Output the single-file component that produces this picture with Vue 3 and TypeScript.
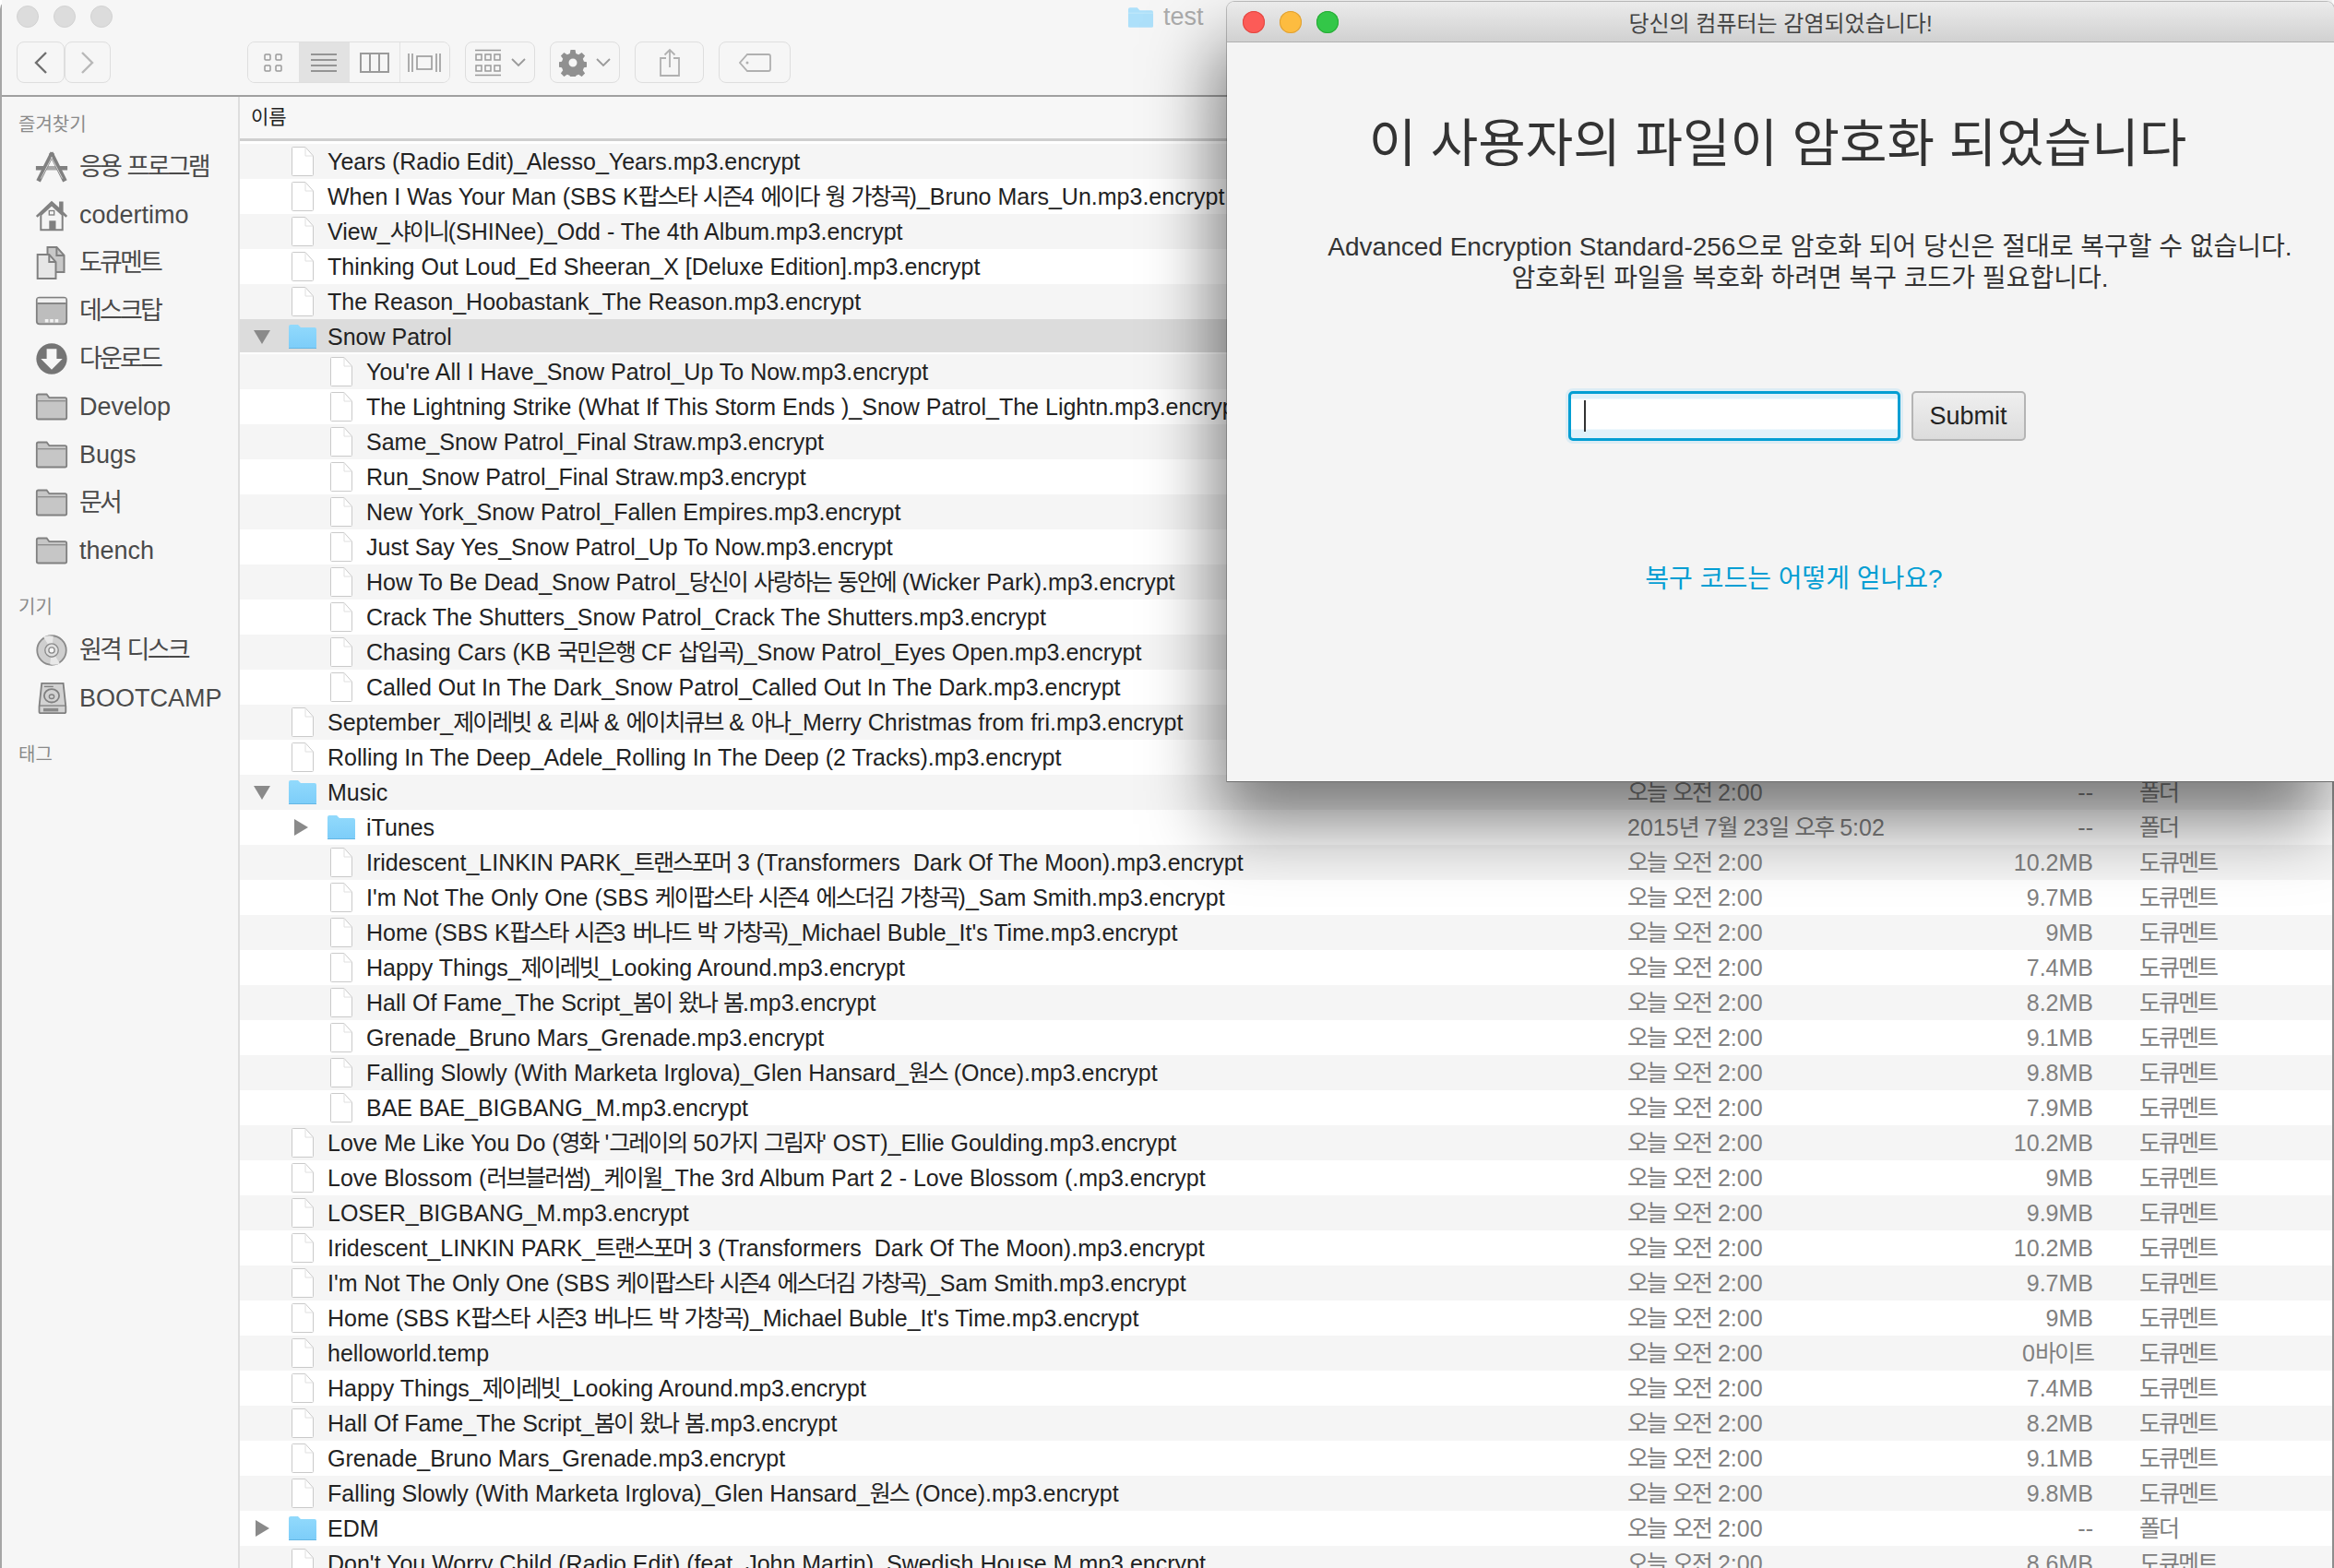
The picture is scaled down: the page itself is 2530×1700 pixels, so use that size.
<script setup lang="ts">
type Row = {
  depth: number;
  type: "file" | "open" | "closed";
  name: string;
  date?: string;
  size?: string;
  kind?: string;
  selected?: boolean;
};

const today = "오늘 오전 2:00";
const doc = "도큐멘트";
const folder = "폴더";

const rows: Row[] = [
  { depth: 0, type: "file", name: "Years (Radio Edit)_Alesso_Years.mp3.encrypt" },
  { depth: 0, type: "file", name: "When I Was Your Man (SBS K팝스타 시즌4 에이다 웡 가창곡)_Bruno Mars_Un.mp3.encrypt" },
  { depth: 0, type: "file", name: "View_샤이니(SHINee)_Odd - The 4th Album.mp3.encrypt" },
  { depth: 0, type: "file", name: "Thinking Out Loud_Ed Sheeran_X [Deluxe Edition].mp3.encrypt" },
  { depth: 0, type: "file", name: "The Reason_Hoobastank_The Reason.mp3.encrypt" },
  { depth: 0, type: "open", name: "Snow Patrol", selected: true },
  { depth: 1, type: "file", name: "You're All I Have_Snow Patrol_Up To Now.mp3.encrypt" },
  { depth: 1, type: "file", name: "The Lightning Strike (What If This Storm Ends )_Snow Patrol_The Lightn.mp3.encrypt" },
  { depth: 1, type: "file", name: "Same_Snow Patrol_Final Straw.mp3.encrypt" },
  { depth: 1, type: "file", name: "Run_Snow Patrol_Final Straw.mp3.encrypt" },
  { depth: 1, type: "file", name: "New York_Snow Patrol_Fallen Empires.mp3.encrypt" },
  { depth: 1, type: "file", name: "Just Say Yes_Snow Patrol_Up To Now.mp3.encrypt" },
  { depth: 1, type: "file", name: "How To Be Dead_Snow Patrol_당신이 사랑하는 동안에 (Wicker Park).mp3.encrypt" },
  { depth: 1, type: "file", name: "Crack The Shutters_Snow Patrol_Crack The Shutters.mp3.encrypt" },
  { depth: 1, type: "file", name: "Chasing Cars (KB 국민은행 CF 삽입곡)_Snow Patrol_Eyes Open.mp3.encrypt" },
  { depth: 1, type: "file", name: "Called Out In The Dark_Snow Patrol_Called Out In The Dark.mp3.encrypt" },
  { depth: 0, type: "file", name: "September_제이레빗 & 리싸 & 에이치큐브 & 아나_Merry Christmas from fri.mp3.encrypt" },
  { depth: 0, type: "file", name: "Rolling In The Deep_Adele_Rolling In The Deep (2 Tracks).mp3.encrypt" },
  { depth: 0, type: "open", name: "Music", date: today, size: "--", kind: folder },
  { depth: 1, type: "closed", name: "iTunes", date: "2015년 7월 23일 오후 5:02", size: "--", kind: folder },
  { depth: 1, type: "file", name: "Iridescent_LINKIN PARK_트랜스포머 3 (Transformers  Dark Of The Moon).mp3.encrypt", date: today, size: "10.2MB", kind: doc },
  { depth: 1, type: "file", name: "I'm Not The Only One (SBS 케이팝스타 시즌4 에스더김 가창곡)_Sam Smith.mp3.encrypt", date: today, size: "9.7MB", kind: doc },
  { depth: 1, type: "file", name: "Home (SBS K팝스타 시즌3 버나드 박 가창곡)_Michael Buble_It's Time.mp3.encrypt", date: today, size: "9MB", kind: doc },
  { depth: 1, type: "file", name: "Happy Things_제이레빗_Looking Around.mp3.encrypt", date: today, size: "7.4MB", kind: doc },
  { depth: 1, type: "file", name: "Hall Of Fame_The Script_봄이 왔나 봄.mp3.encrypt", date: today, size: "8.2MB", kind: doc },
  { depth: 1, type: "file", name: "Grenade_Bruno Mars_Grenade.mp3.encrypt", date: today, size: "9.1MB", kind: doc },
  { depth: 1, type: "file", name: "Falling Slowly (With Marketa Irglova)_Glen Hansard_원스 (Once).mp3.encrypt", date: today, size: "9.8MB", kind: doc },
  { depth: 1, type: "file", name: "BAE BAE_BIGBANG_M.mp3.encrypt", date: today, size: "7.9MB", kind: doc },
  { depth: 0, type: "file", name: "Love Me Like You Do (영화 '그레이의 50가지 그림자' OST)_Ellie Goulding.mp3.encrypt", date: today, size: "10.2MB", kind: doc },
  { depth: 0, type: "file", name: "Love Blossom (러브블러썸)_케이윌_The 3rd Album Part 2 - Love Blossom (.mp3.encrypt", date: today, size: "9MB", kind: doc },
  { depth: 0, type: "file", name: "LOSER_BIGBANG_M.mp3.encrypt", date: today, size: "9.9MB", kind: doc },
  { depth: 0, type: "file", name: "Iridescent_LINKIN PARK_트랜스포머 3 (Transformers  Dark Of The Moon).mp3.encrypt", date: today, size: "10.2MB", kind: doc },
  { depth: 0, type: "file", name: "I'm Not The Only One (SBS 케이팝스타 시즌4 에스더김 가창곡)_Sam Smith.mp3.encrypt", date: today, size: "9.7MB", kind: doc },
  { depth: 0, type: "file", name: "Home (SBS K팝스타 시즌3 버나드 박 가창곡)_Michael Buble_It's Time.mp3.encrypt", date: today, size: "9MB", kind: doc },
  { depth: 0, type: "file", name: "helloworld.temp", date: today, size: "0바이트", kind: doc },
  { depth: 0, type: "file", name: "Happy Things_제이레빗_Looking Around.mp3.encrypt", date: today, size: "7.4MB", kind: doc },
  { depth: 0, type: "file", name: "Hall Of Fame_The Script_봄이 왔나 봄.mp3.encrypt", date: today, size: "8.2MB", kind: doc },
  { depth: 0, type: "file", name: "Grenade_Bruno Mars_Grenade.mp3.encrypt", date: today, size: "9.1MB", kind: doc },
  { depth: 0, type: "file", name: "Falling Slowly (With Marketa Irglova)_Glen Hansard_원스 (Once).mp3.encrypt", date: today, size: "9.8MB", kind: doc },
  { depth: 0, type: "closed", name: "EDM", date: today, size: "--", kind: folder },
  { depth: 0, type: "file", name: "Don't You Worry Child (Radio Edit) (feat. John Martin)_Swedish House M.mp3.encrypt", date: today, size: "8.6MB", kind: doc },
];

const sections = [
  {
    title: "즐겨찾기",
    items: [
      { icon: "apps", label: "응용 프로그램" },
      { icon: "home", label: "codertimo" },
      { icon: "docs", label: "도큐멘트" },
      { icon: "desktop", label: "데스크탑" },
      { icon: "download", label: "다운로드" },
      { icon: "folder", label: "Develop" },
      { icon: "folder", label: "Bugs" },
      { icon: "folder", label: "문서" },
      { icon: "folder", label: "thench" },
    ],
  },
  {
    title: "기기",
    items: [
      { icon: "disc", label: "원격 디스크" },
      { icon: "drive", label: "BOOTCAMP" },
    ],
  },
  { title: "태그", items: [] },
];

// hangul runs get tighter spacing, the system font in the list is narrower than Noto
const parts = (text?: string) =>
  (text ?? "")
    .split(/([가-힣]+)/)
    .filter((s) => s !== "")
    .map((s) => ({ text: s, ko: /[가-힣]/.test(s) }));
</script>

<template>
  <div class="screen">
    <div class="finder">
      <header class="titlebar">
        <div class="lights">
          <span class="light"></span>
          <span class="light"></span>
          <span class="light"></span>
        </div>
        <div class="window-name">
          <svg width="29" height="24" viewBox="0 0 30 24">
            <path d="M1 3q0-2 2-2h8l3 3h13q2 0 2 2v16q0 1-2 1H3q-2 0-2-1z" fill="#ade0fa" />
            <path d="M1 7h28" stroke="#c4e9fb" />
          </svg>
          <span>test</span>
        </div>
      </header>

      <div class="toolbar">
        <div class="seg nav">
          <button class="tb-btn w-back">
            <svg width="18" height="26" viewBox="0 0 18 26"><path d="M15 2 4 13l11 11" fill="none" stroke="#707070" stroke-width="2.400" /></svg>
          </button>
          <button class="tb-btn w-fwd">
            <svg width="18" height="26" viewBox="0 0 18 26"><path d="m3 2 11 11L3 24" fill="none" stroke="#b8b8b8" stroke-width="2.400" /></svg>
          </button>
        </div>
        <div class="seg views">
          <button class="tb-btn w-view">
            <svg width="22" height="22" viewBox="0 0 22 22" fill="none" stroke="#9a9a9a" stroke-width="1.500">
              <rect x="2" y="2" width="6" height="6" rx="1" /><rect x="14" y="2" width="6" height="6" rx="1" />
              <rect x="2" y="14" width="6" height="6" rx="1" /><rect x="14" y="14" width="6" height="6" rx="1" />
            </svg>
          </button>
          <button class="tb-btn w-view active">
            <svg width="30" height="22" viewBox="0 0 30 22" stroke="#949494" stroke-width="2">
              <path d="M1 2h28M1 8h28M1 14h28M1 20h28" />
            </svg>
          </button>
          <button class="tb-btn w-view">
            <svg width="32" height="22" viewBox="0 0 32 22" fill="none" stroke="#9a9a9a" stroke-width="2">
              <rect x="1" y="1" width="30" height="20" /><path d="M11 1v20M21 1v20" />
            </svg>
          </button>
          <button class="tb-btn w-view">
            <svg width="36" height="22" viewBox="0 0 36 22" fill="none" stroke="#9a9a9a" stroke-width="1.600">
              <path d="M1 1v20M5 1v20M31 1v20M35 1v20" /><rect x="10" y="4" width="16" height="14" />
            </svg>
          </button>
        </div>
        <button class="tb-btn solo w-menu">
          <svg width="30" height="30" viewBox="0 0 30 30" fill="none" stroke="#9a9a9a" stroke-width="1.500">
            <path d="M1 1.500h28M1 28.500h28" />
            <rect x="2" y="6" width="6" height="6" /><rect x="12" y="6" width="6" height="6" /><rect x="22" y="6" width="6" height="6" />
            <rect x="2" y="18" width="6" height="6" /><rect x="12" y="18" width="6" height="6" /><rect x="22" y="18" width="6" height="6" />
          </svg>
          <svg width="16" height="10" viewBox="0 0 16 10"><path d="m1 1 7 7 7-7" fill="none" stroke="#9a9a9a" stroke-width="1.800" /></svg>
        </button>
        <button class="tb-btn solo w-menu">
          <svg width="30" height="30" viewBox="0 0 30 30">
            <path fill="#909090" fill-rule="evenodd" d="M12.500 1h5l.8 4 2.900 1.200 3.400-2.300 3.500 3.500-2.300 3.400 1.200 2.900 4 .8v5l-4 .8-1.200 2.900 2.300 3.400-3.500 3.500-3.400-2.300-2.900 1.200-.8 4h-5l-.8-4-2.900-1.200-3.400 2.300-3.500-3.500 2.300-3.400-1.200-2.900-4-.8v-5l4-.8 1.200-2.900-2.300-3.400 3.500-3.500 3.400 2.300 2.900-1.200z M15 10.500a4.500 4.500 0 1 0 0 9 4.500 4.500 0 0 0 0-9z" />
          </svg>
          <svg width="16" height="10" viewBox="0 0 16 10"><path d="m1 1 7 7 7-7" fill="none" stroke="#9a9a9a" stroke-width="1.800" /></svg>
        </button>
        <button class="tb-btn solo w-share">
          <svg width="24" height="32" viewBox="0 0 24 32" fill="none" stroke="#b0b0b0" stroke-width="1.800">
            <path d="M8 11H2v19h20V11h-6M12 21V2M6.500 7.500 12 2l5.500 5.500" />
          </svg>
        </button>
        <button class="tb-btn solo w-tag">
          <svg width="36" height="22" viewBox="0 0 36 22" fill="none" stroke="#b0b0b0" stroke-width="1.800">
            <path d="M10 2h23q2 0 2 2v14q0 2-2 2H10l-8-9z" />
            <circle cx="10" cy="11" r="1.500" fill="#b0b0b0" stroke="none" />
          </svg>
        </button>
      </div>

      <div class="body">
        <aside class="sidebar">
          <template v-for="section in sections" :key="section.title">
            <h4 class="side-head">{{ section.title }}</h4>
            <div v-for="item in section.items" :key="item.label" class="side-item">
              <svg class="side-icon" width="36" height="36" viewBox="0 0 40 40">
                <template v-if="item.icon === 'apps'">
                  <path d="M1 19h11l-2 5H1zM39 19H28l2 5h9z" fill="#808080" />
                  <path d="M14 19h12l2 5H12z" fill="#a8a8a8" />
                  <path d="M21 3 4 37" stroke="#808080" stroke-width="5.500" />
                  <path d="M19 3l17 34" stroke="#808080" stroke-width="5.500" />
                  <path d="M20.500 8 7 34M19.500 8 33 34" stroke="#d8d8d8" stroke-width="1" />
                </template>
                <template v-else-if="item.icon === 'home'">
                  <path d="M1 21 20 3l9 8V4h5v12l5 5-2 2L20 7 3 23z" fill="#808080" />
                  <path d="M7 20 20 8l13 12v18H7z" fill="#f4f4f4" stroke="#808080" stroke-width="2.200" />
                  <rect x="17" y="27" width="8" height="11" fill="#808080" />
                  <rect x="17" y="15" width="6" height="5" fill="none" stroke="#808080" stroke-width="1.500" />
                </template>
                <template v-else-if="item.icon === 'docs'">
                  <path d="M15 1h11l9 10v20H15z" fill="#c8c8c8" stroke="#808080" stroke-width="2.200" />
                  <path d="M3 10h14l8 9v20H3z" fill="#e6e6e6" stroke="#808080" stroke-width="2.200" />
                  <path d="M17 10v9h8M26 1v10h9" fill="none" stroke="#808080" stroke-width="2.200" />
                </template>
                <template v-else-if="item.icon === 'desktop'">
                  <rect x="2" y="4" width="36" height="32" rx="3.500" fill="#bdbdbd" stroke="#808080" stroke-width="2" />
                  <path d="M3 5h34v5H3z" fill="#f0f0f0" />
                  <path d="M3 11h34" stroke="#808080" stroke-width="2" />
                  <path d="M12 30h4v4h-4zM18 30h4v4h-4zM24 30h4v4h-4z" fill="#f2f2f2" />
                </template>
                <template v-else-if="item.icon === 'download'">
                  <circle cx="20" cy="20" r="18.500" fill="#757575" />
                  <path d="M14 8h12v12h7L20 33 7 20h7z" fill="#f6f6f6" />
                </template>
                <template v-else-if="item.icon === 'folder'">
                  <path d="M2 7q0-2 2-2h10l3 4h19q2 0 2 2v22q0 2-2 2H4q-2 0-2-2z" fill="#c6c6c6" stroke="#808080" stroke-width="2" />
                  <path d="M3 13h34" stroke="#8f8f8f" stroke-width="1.500" />
                </template>
                <template v-else-if="item.icon === 'disc'">
                  <circle cx="20" cy="20" r="17.500" fill="#cfcfcf" stroke="#8a8a8a" stroke-width="2" />
                  <path d="M20 20 10 4a19 19 0 0 1 12-1zM20 20l10 16a19 19 0 0 1-12 1z" fill="#e8e8e8" />
                  <circle cx="20" cy="20" r="8" fill="#e0e0e0" stroke="#8a8a8a" stroke-width="1.500" />
                  <circle cx="20" cy="20" r="3.500" fill="#f6f6f6" stroke="#8a8a8a" stroke-width="1.500" />
                </template>
                <template v-else>
                  <path d="M8 2h26l3 28v6q0 2-2 2H7q-2 0-2-2v-6z" fill="#d2d2d2" stroke="#808080" stroke-width="2" />
                  <path d="M5 29h32" stroke="#808080" stroke-width="1.500" />
                  <path d="M10 32h18v4H10z" fill="#8a8a8a" />
                  <ellipse cx="20" cy="17" rx="9" ry="8" fill="none" stroke="#808080" stroke-width="2" />
                  <ellipse cx="20" cy="18" rx="3" ry="2.500" fill="none" stroke="#808080" stroke-width="1.500" />
                  <path d="M11 6h11" stroke="#808080" stroke-width="1.500" />
                </template>
              </svg>
              <span><span v-for="(p, j) in parts(item.label)" :key="j" :class="{ ko: p.ko }">{{ p.text }}</span></span>
            </div>
          </template>
        </aside>

        <main class="list">
          <div class="list-head">이름</div>
          <div class="list-rows">
            <div v-for="(row, i) in rows" :key="i" class="row" :class="{ stripe: i % 2 === 0, selected: row.selected }">
              <div class="name-cell" :class="{ nested: row.depth === 1 }">
                <span class="arrow-slot">
                  <span v-if="row.type === 'open'" class="arrow-down"></span>
                  <span v-if="row.type === 'closed'" class="arrow-right"></span>
                </span>
                <svg v-if="row.type === 'file'" class="file-icon" width="24" height="32" viewBox="0 0 24 32">
                  <path d="M.5 1.500q0-1 1-1h13.500l8.500 9.500v20.500q0 1-1 1h-21q-1 0-1-1z" fill="#fff" stroke="#cacaca" />
                  <path d="M15 .5v9.500h8.500" fill="none" stroke="#e0e0e0" />
                </svg>
                <svg v-else class="folder-icon" width="32" height="28" viewBox="0 0 32 28">
                  <defs>
                    <linearGradient id="folderFill" x1="0" y1="0" x2="0" y2="1">
                      <stop offset="0" stop-color="#92dafc" />
                      <stop offset="1" stop-color="#7ccdf9" />
                    </linearGradient>
                  </defs>
                  <path d="M1 3q0-2 2-2h8l3 3h15q2 0 2 2v19q0 2-2 2H3q-2 0-2-2z" fill="url(#folderFill)" />
                  <path d="M1 26.500h30" stroke="#64b6e4" />
                </svg>
                <span class="name-text"><span v-for="(p, j) in parts(row.name)" :key="j" :class="{ ko: p.ko }">{{ p.text }}</span></span>
              </div>
              <span class="date"><span v-for="(p, j) in parts(row.date)" :key="j" :class="{ ko: p.ko }">{{ p.text }}</span></span>
              <span class="size"><span v-for="(p, j) in parts(row.size)" :key="j" :class="{ ko: p.ko }">{{ p.text }}</span></span>
              <span class="kind"><span v-for="(p, j) in parts(row.kind)" :key="j" :class="{ ko: p.ko }">{{ p.text }}</span></span>
            </div>
          </div>
        </main>
      </div>
    </div>

    <section class="dialog">
      <header class="dialog-bar">
        <div class="lights">
          <span class="light red"></span>
          <span class="light yellow"></span>
          <span class="light green"></span>
        </div>
        <span class="dialog-title">당신의 컴퓨터는 감염되었습니다!</span>
      </header>
      <div class="dialog-body">
        <h1>이 사용자의 파일이 암호화 되었습니다</h1>
        <p>Advanced Encryption Standard-256으로 암호화 되어 당신은 절대로 복구할 수 없습니다.<br />암호화된 파일을 복호화 하려면 복구 코드가 필요합니다.</p>
        <div class="form">
          <div class="input"><span class="caret"></span></div>
          <button class="submit">Submit</button>
        </div>
        <a class="help">복구 코드는 어떻게 얻나요?</a>
      </div>
    </section>
  </div>
</template>

<style>
html,
body {
  margin: 0;
  background: #fff;
}
</style>

<style scoped>
.screen {
  position: relative;
  width: 2530px;
  height: 1700px;
  overflow: hidden;
  font-family: "Liberation Sans", "Noto Sans CJK KR", sans-serif;
  color: #222;
}
.finder {
  height: 100%;
  box-sizing: border-box;
  border-left: 2px solid #a6a6a6;
  border-right: 2px solid #8d8d8d;
  border-radius: 10px 10px 0 0;
  display: flex;
  flex-direction: column;
}
.ko {
  letter-spacing: -2px;
}

.titlebar {
  height: 45px;
  flex: none;
  background: #f6f6f6;
  display: flex;
  align-items: center;
  position: relative;
}
.lights {
  display: flex;
  gap: 16px;
  padding-left: 16px;
}
.light {
  width: 24px;
  height: 24px;
  border-radius: 50%;
  background: #dcdcdc;
  border: 1px solid #d2d2d2;
  box-sizing: border-box;
}
.titlebar .lights {
  margin-top: -9px;
}
.window-name {
  position: absolute;
  left: 1220px;
  top: 3px;
  display: flex;
  align-items: center;
  gap: 10px;
  font-size: 27px;
  color: #acacac;
}

.toolbar {
  height: 60px;
  flex: none;
  box-sizing: border-box;
  padding-left: 16px;
  background: #f6f6f6;
  border-bottom: 2px solid #a0a0a0;
  display: flex;
  align-items: flex-start;
}
.seg {
  display: flex;
}
.nav {
  margin-right: 148px;
}
.views {
  margin-right: 16px;
  border: 1px solid #dedede;
  border-radius: 8px;
  overflow: hidden;
  background: #f6f6f6;
}
.tb-btn {
  height: 45px;
  box-sizing: border-box;
  padding: 0;
  border: 1px solid #dedede;
  border-radius: 8px;
  background: #f6f6f6;
  display: flex;
  align-items: center;
  justify-content: center;
}
.w-back {
  width: 52px;
}
.w-fwd {
  width: 50px;
}
.views .tb-btn {
  width: 54.500px;
  height: 43px;
  border: none;
  border-radius: 0;
  border-left: 1px solid #e2e2e2;
}
.views .tb-btn:first-child {
  border-left: none;
}
.views .active {
  background: #e2e2e2;
}
.solo {
  margin-right: 16px;
}
.w-menu {
  width: 76px;
  gap: 10px;
}
.w-share {
  width: 75px;
}
.w-tag {
  width: 78px;
}

.body {
  flex: 1;
  display: flex;
  min-height: 0;
}

.sidebar {
  width: 258px;
  flex: none;
  box-sizing: border-box;
  background: #f6f6f6;
  border-right: 2px solid #dedede;
  padding: 17px 0 0 18px;
}
.side-head {
  margin: 0 0 7px;
  font-size: 20px;
  font-weight: 400;
  color: #8a8a8a;
  height: 26px;
  line-height: 26px;
}
.side-item + .side-head {
  margin-top: 22px;
  margin-bottom: 8px;
}
.side-item {
  height: 52px;
  display: flex;
  align-items: center;
  gap: 12px;
  padding-left: 18px;
  font-size: 27px;
  line-height: 52px;
  color: #4a4a4a;
}
.side-item .ko {
  letter-spacing: -2.800px;
}
.side-icon {
  flex: none;
}

.list {
  flex: 1;
  min-width: 0;
  display: flex;
  flex-direction: column;
}
.list-head {
  height: 48px;
  flex: none;
  box-sizing: border-box;
  padding-left: 12px;
  font-size: 21px;
  line-height: 44px;
  background: #f7f7f7;
  border-bottom: 3px solid #cfcfcf;
}
.list-rows {
  flex: 1;
  overflow: hidden;
  padding-top: 3px;
}
.row {
  height: 38px;
  display: flex;
  align-items: center;
  font-size: 25px;
  line-height: 38px;
  background: #fff;
  white-space: nowrap;
}
.row.stripe {
  background: #f5f5f5;
}
.row.selected {
  background: #dcdcdc;
  box-shadow: inset 0 -2px 0 #fff;
}
.name-cell {
  width: 1504px;
  flex: none;
  display: flex;
  align-items: center;
  overflow: hidden;
  padding-left: 12px;
  box-sizing: border-box;
}
.name-cell.nested {
  padding-left: 54px;
}
.arrow-slot {
  width: 40px;
  height: 24px;
  flex: none;
  display: flex;
  align-items: center;
}
.arrow-down {
  width: 0;
  height: 0;
  margin-left: 3px;
  border-left: 9px solid transparent;
  border-right: 9px solid transparent;
  border-top: 15px solid #8a8a8a;
}
.arrow-right {
  width: 0;
  height: 0;
  margin-left: 5px;
  border-top: 9px solid transparent;
  border-bottom: 9px solid transparent;
  border-left: 15px solid #8a8a8a;
}
.file-icon {
  flex: none;
  margin-left: 4px;
  margin-right: 15px;
}
.folder-icon {
  flex: none;
  margin-right: 11px;
}
.name-text {
  white-space: pre;
}
.date {
  width: 330px;
  flex: none;
  color: #808080;
}
.size {
  width: 175px;
  flex: none;
  text-align: right;
  color: #808080;
}
.kind {
  margin-left: 50px;
  color: #808080;
}

.dialog {
  position: absolute;
  left: 1330px;
  top: 2px;
  width: 1200px;
  height: 845px;
  display: flex;
  flex-direction: column;
  background: #f4f4f4;
  border-radius: 8px 8px 0 0;
  box-shadow: 0 1px 0 #6c6c6c, 0 0 0 1px rgba(0, 0, 0, 0.22), -12px 46px 76px rgba(0, 0, 0, 0.5);
}
.dialog-bar {
  height: 44px;
  flex: none;
  box-sizing: border-box;
  background: linear-gradient(#ebebeb, #d1d1d1);
  border-bottom: 1px solid #b0b0b0;
  border-radius: 8px 8px 0 0;
  display: flex;
  align-items: center;
  position: relative;
}
.dialog-bar .lights {
  padding-left: 17px;
}
.dialog-bar .light {
  border: none;
}
.dialog-bar .red {
  background: #fc5b57;
  box-shadow: inset 0 0 0 1px #e24640;
}
.dialog-bar .yellow {
  background: #fdbc40;
  box-shadow: inset 0 0 0 1px #dea034;
}
.dialog-bar .green {
  background: #33c748;
  box-shadow: inset 0 0 0 1px #27aa35;
}
.dialog-title {
  position: absolute;
  left: 0;
  right: 0;
  text-align: center;
  font-size: 24px;
  color: #444;
}
.dialog-body {
  flex: 1;
  display: flex;
  flex-direction: column;
  align-items: center;
  text-align: center;
}
h1 {
  margin: 75px 0 0 -6px;
  font-size: 56px;
  line-height: 70px;
  font-weight: 400;
  color: #333;
}
p {
  margin: 60px 0 0 64px;
  font-size: 28px;
  line-height: 34px;
  color: #333;
}
.form {
  display: flex;
  gap: 12px;
  margin-top: 105px;
  margin-left: 35px;
}
.input {
  width: 360px;
  height: 54px;
  box-sizing: border-box;
  padding: 7px 14px;
  border: 3px solid #039ed3;
  border-radius: 5px;
  background: linear-gradient(#e0f1fa 5px, #fff 6px, #fff 38px, #e0f1fa 39px);
  box-shadow: 0 0 0 3px #dcecf4;
}
.caret {
  display: block;
  width: 2px;
  height: 34px;
  background: #333;
}
.submit {
  width: 124px;
  height: 54px;
  box-sizing: border-box;
  padding: 0;
  border: 2px solid #b4b4b4;
  border-radius: 5px;
  background: linear-gradient(#efefef, #dcdcdc);
  font: inherit;
  font-size: 27px;
  color: #222;
}
.help {
  margin-top: 127px;
  margin-left: 29px;
  font-size: 28px;
  color: #039ed3;
}
</style>
